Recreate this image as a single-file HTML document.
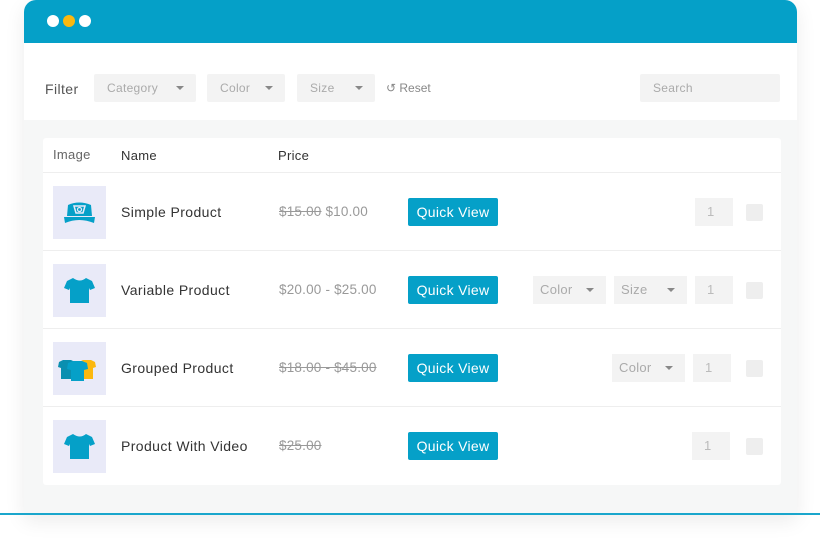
<!DOCTYPE html>
<html><head><style>
*{margin:0;padding:0;box-sizing:border-box}
body{width:820px;height:544px;background:#fff;font-family:"Liberation Sans",sans-serif;position:relative;overflow:hidden}
.win{position:absolute;left:24px;top:0;width:773px;height:515px;background:#f6f7f7;border-radius:12px 12px 0 0;box-shadow:0 6px 20px rgba(0,0,0,.08)}
.hdr{height:43px;background:#05a0c8;border-radius:12px 12px 0 0;position:relative}
.dot{position:absolute;top:15px;width:12px;height:12px;border-radius:50%;background:#fff}
.fb{position:absolute;top:43px;left:0;width:773px;height:77px;background:#fff}
.sel{position:absolute;top:74px;height:28px;background:#f3f3f3;border-radius:2px;font-size:12px;color:#aaa;line-height:28px;padding-left:13px;letter-spacing:.3px}
.sel i,.s2 i{position:absolute;right:12px;top:12px;border-left:4px solid transparent;border-right:4px solid transparent;border-top:4px solid #888}
.card{position:absolute;left:43px;top:138px;width:738px;height:347px;background:#fff;border-radius:3px}
.row{position:absolute;left:0;width:738px;height:78px;border-top:1px solid #eee}
.img{position:absolute;left:10px;top:13px;width:53px;height:53px;background:#e9eaf8}
.nm{position:absolute;left:78px;top:31px;font-size:14px;color:#333;letter-spacing:.4px}
.pr{position:absolute;left:236px;top:31px;font-size:13.5px;color:#999;letter-spacing:.2px}
.btn{position:absolute;left:365px;top:25px;width:90px;height:28px;background:#05a0c8;color:#fff;font-size:14px;line-height:28px;text-align:center;border-radius:2px;letter-spacing:.3px}
.qty{position:absolute;top:25px;width:38px;height:28px;background:#f3f3f3;color:#bbb;font-size:13px;line-height:28px;padding-left:12px}
.cb{position:absolute;left:703px;top:31px;width:17px;height:17px;background:#eee;border-radius:2px}
.s2{position:absolute;top:25px;height:28px;background:#f3f3f3;color:#aaa;font-size:13px;line-height:28px;padding-left:7px;letter-spacing:.3px}
</style></head><body>
<div class="win">
<div class="hdr"><div class="dot" style="left:23px"></div><div class="dot" style="left:39px;background:#fbb80f"></div><div class="dot" style="left:55px"></div></div>
<div class="fb"></div>
</div>
<div style="position:absolute;left:45px;top:81px;font-size:14px;color:#555;letter-spacing:.4px">Filter</div>
<div class="sel" style="left:94px;width:102px">Category<i></i></div>
<div class="sel" style="left:207px;width:78px">Color<i></i></div>
<div class="sel" style="left:297px;width:78px">Size<i></i></div>
<div style="position:absolute;left:386px;top:81px;font-size:12px;color:#888">↺ Reset</div>
<div class="sel" style="left:640px;width:140px">Search</div>
<div class="card">
<div style="position:absolute;left:10px;top:9px;font-size:13px;color:#666;letter-spacing:.3px">Image</div>
<div style="position:absolute;left:78px;top:10px;font-size:13px;color:#333;letter-spacing:.3px">Name</div>
<div style="position:absolute;left:235px;top:10px;font-size:13px;color:#333;letter-spacing:.3px">Price</div>
<div class="row" style="top:34px">
<div class="img"><svg width="53" height="53"><path d="M15 19 Q26 14 38 19 L39 30 L14 30Z" fill="#05a0c8"/><path d="M11 31 H42 L41 37 Q26 31 12 37Z" fill="#05a0c8"/><path d="M21 20 L32 20 L30 27 L23 27Z" fill="none" stroke="#e9eaf8" stroke-width="1.5"/><circle cx="26.5" cy="23.5" r="2" fill="none" stroke="#e9eaf8" stroke-width="1.2"/></svg></div>
<div class="nm">Simple Product</div><div class="pr"><s>$15.00</s> $10.00</div><div class="btn">Quick View</div>
<div class="qty" style="left:652px">1</div><div class="cb"></div></div>
<div class="row" style="top:112px">
<div class="img"><svg width="53" height="53"><path d="M20 14 L14 17 L11 24 L16 26 L17 24 L17 39 L36 39 L36 24 L37 26 L42 24 L39 17 L33 14 Q27 19 20 14Z" fill="#05a0c8"/></svg></div>
<div class="nm">Variable Product</div><div class="pr">$20.00 - $25.00</div><div class="btn">Quick View</div>
<div class="s2" style="left:490px;width:73px">Color<i></i></div><div class="s2" style="left:571px;width:73px">Size<i></i></div>
<div class="qty" style="left:652px">1</div><div class="cb"></div></div>
<div class="row" style="top:190px">
<div class="img"><svg width="53" height="53"><path d="M30 18 L26 20 L25 25 L28 26 L28 37 L40 37 L40 26 L43 25 L42 20 L38 18Z" fill="#fbb80f"/><path d="M10 18 L6 20 L5 25 L8 26 L8 37 L20 37 L20 26 L23 25 L22 20 L18 18Z" fill="#0a8fb0"/><path d="M20 19 L15 21 L14 27 L18 28 L18 39 L31 39 L31 28 L35 27 L34 21 L29 19Z" fill="#05a0c8"/></svg></div>
<div class="nm">Grouped Product</div><div class="pr"><s>$18.00 - $45.00</s></div><div class="btn">Quick View</div>
<div class="s2" style="left:569px;width:73px">Color<i></i></div>
<div class="qty" style="left:650px">1</div><div class="cb"></div></div>
<div class="row" style="top:268px">
<div class="img"><svg width="53" height="53"><path d="M20 14 L14 17 L11 24 L16 26 L17 24 L17 39 L36 39 L36 24 L37 26 L42 24 L39 17 L33 14 Q27 19 20 14Z" fill="#05a0c8"/></svg></div>
<div class="nm">Product With Video</div><div class="pr"><s>$25.00</s></div><div class="btn">Quick View</div>
<div class="qty" style="left:649px">1</div><div class="cb"></div></div>
</div>
<div style="position:absolute;left:0;top:513px;width:820px;height:2px;background:#1aa6cc"></div>
</body></html>
